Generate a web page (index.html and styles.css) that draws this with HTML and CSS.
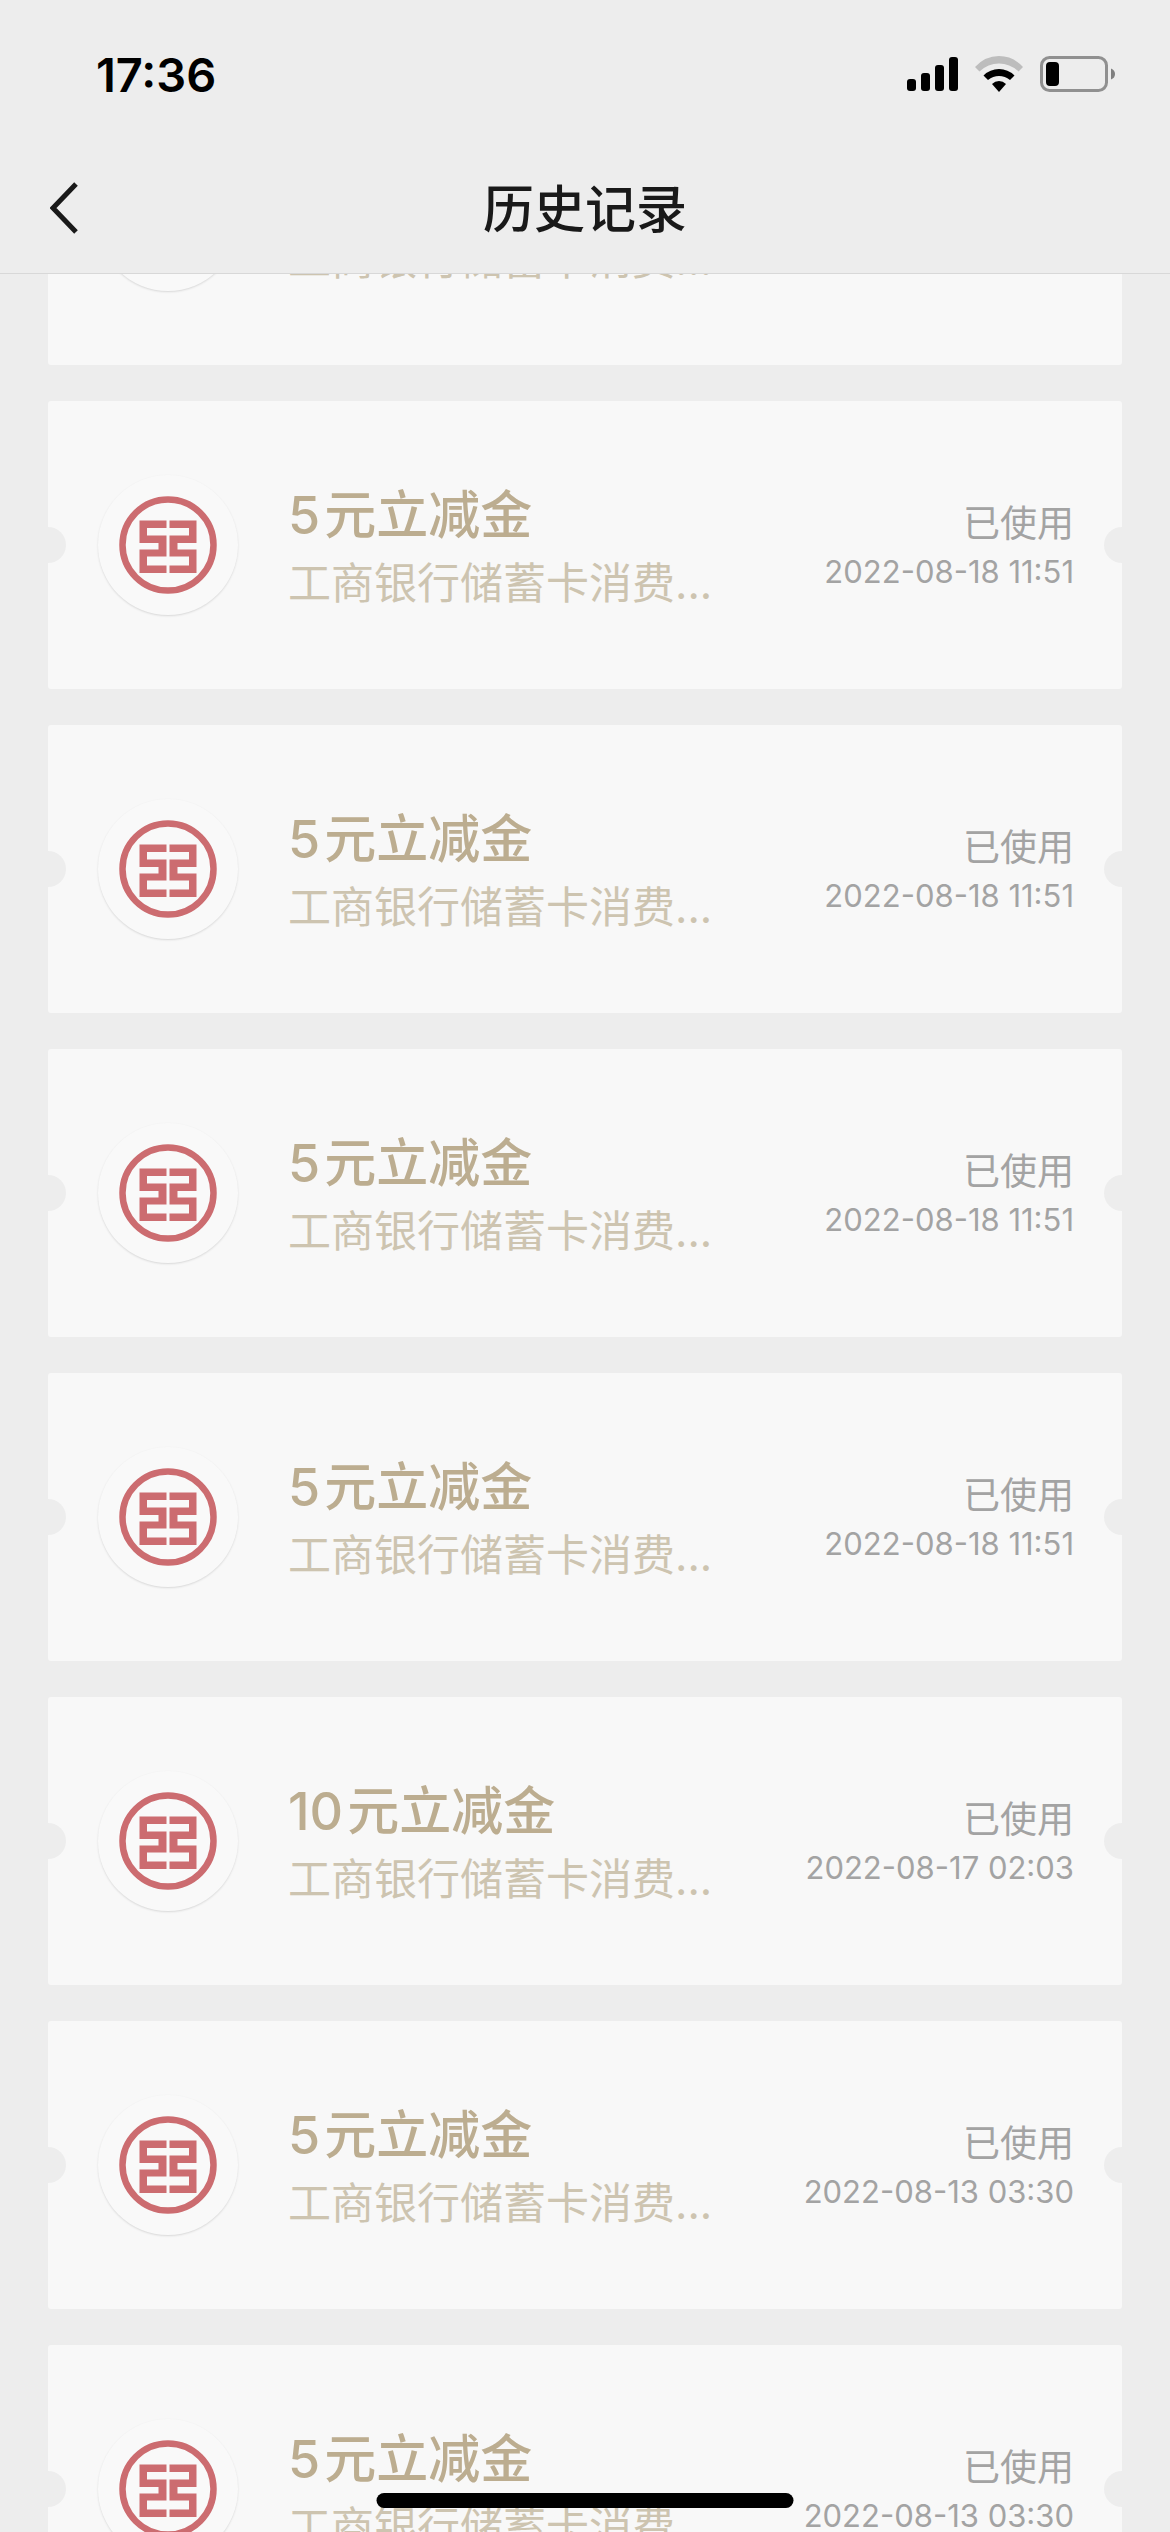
FILE: index.html
```html
<!DOCTYPE html>
<html lang="zh-CN">
<head>
    <meta charset="UTF-8">
    <meta name="viewport" content="width=device-width, initial-scale=1.0">
    <title>历史记录</title>
    <link rel="stylesheet" href="styles.css">
</head>
<body>
    <svg class="defs" aria-hidden="true">
        <symbol id="icbc" viewBox="0 0 98 98">
            <circle cx="49" cy="49" r="45.5" fill="none" stroke="currentColor" stroke-width="6.5"/>
            <path fill="currentColor" d="M20.5 24.5H47.5V32H28V39.5H47.5V60.5H28V69.5H47.5V77H20.5V53.5H39.5V47H20.5Z"/>
            <path fill="currentColor" d="M77.5 24.5H50.5V32H70V39.5H50.5V60.5H70V69.5H50.5V77H77.5V53.5H58.5V47H77.5Z"/>
        </symbol>
    </svg>

    <header class="header">
        <div class="status-bar">
            <span class="time">17:36</span>
            <div class="status-icons">
                <svg width="51" height="36" viewBox="0 0 51 36">
                    <rect x="0" y="23" width="9" height="12" rx="3"/>
                    <rect x="14" y="17" width="9" height="18" rx="3"/>
                    <rect x="28" y="9" width="9" height="26" rx="3"/>
                    <rect x="42" y="1" width="9" height="34" rx="3"/>
                </svg>
                <svg width="48" height="36" viewBox="0 0 48 36">
                    <path fill="#bdbdbd" d="M0 11Q10 0 24 0T48 11L43.500 15.500Q35 7.500 24 7.500T4.500 15.500Z"/>
                    <path d="M8.500 19.500Q15 13 24 13T39.500 19.500L35 24Q30 20 24 20T13 24Z"/>
                    <path d="M17 28Q20 25 24 25T31 28L24 36Z"/>
                </svg>
                <svg width="75" height="36" viewBox="0 0 75 36">
                    <rect x="1.500" y="1.500" width="65" height="33" rx="8" fill="none" stroke="#909090" stroke-width="3"/>
                    <rect x="6" y="6" width="13" height="24" rx="4"/>
                    <path fill="#808080" d="M71 12.500Q75 14 75 18T71 23.500Z"/>
                </svg>
            </div>
        </div>
        <nav class="nav">
            <button class="back" type="button" aria-label="返回">
                <svg width="28" height="52" viewBox="0 0 28 52">
                    <path d="M26 2L3 26L26 50" fill="none" stroke="#191919" stroke-width="5"/>
                </svg>
            </button>
            <h1 class="title">历史记录</h1>
        </nav>
    </header>

    <main class="content">
        <ul class="list">
            <li class="card">
                <div class="logo"><svg><use href="#icbc"/></svg></div>
                <div class="info">
                    <h2 class="name"><span class="amount">5</span>元立减金</h2>
                    <p class="desc">工商银行储蓄卡消费...</p>
                </div>
                <div class="state">
                    <p class="used">已使用</p>
                    <time class="date">2022-08-18 11:51</time>
                </div>
            </li>
            <li class="card">
                <div class="logo"><svg><use href="#icbc"/></svg></div>
                <div class="info">
                    <h2 class="name"><span class="amount">5</span>元立减金</h2>
                    <p class="desc">工商银行储蓄卡消费...</p>
                </div>
                <div class="state">
                    <p class="used">已使用</p>
                    <time class="date">2022-08-18 11:51</time>
                </div>
            </li>
            <li class="card">
                <div class="logo"><svg><use href="#icbc"/></svg></div>
                <div class="info">
                    <h2 class="name"><span class="amount">5</span>元立减金</h2>
                    <p class="desc">工商银行储蓄卡消费...</p>
                </div>
                <div class="state">
                    <p class="used">已使用</p>
                    <time class="date">2022-08-18 11:51</time>
                </div>
            </li>
            <li class="card">
                <div class="logo"><svg><use href="#icbc"/></svg></div>
                <div class="info">
                    <h2 class="name"><span class="amount">5</span>元立减金</h2>
                    <p class="desc">工商银行储蓄卡消费...</p>
                </div>
                <div class="state">
                    <p class="used">已使用</p>
                    <time class="date">2022-08-18 11:51</time>
                </div>
            </li>
            <li class="card">
                <div class="logo"><svg><use href="#icbc"/></svg></div>
                <div class="info">
                    <h2 class="name"><span class="amount">5</span>元立减金</h2>
                    <p class="desc">工商银行储蓄卡消费...</p>
                </div>
                <div class="state">
                    <p class="used">已使用</p>
                    <time class="date">2022-08-18 11:51</time>
                </div>
            </li>
            <li class="card">
                <div class="logo"><svg><use href="#icbc"/></svg></div>
                <div class="info">
                    <h2 class="name"><span class="amount">10</span>元立减金</h2>
                    <p class="desc">工商银行储蓄卡消费...</p>
                </div>
                <div class="state">
                    <p class="used">已使用</p>
                    <time class="date">2022-08-17 02:03</time>
                </div>
            </li>
            <li class="card">
                <div class="logo"><svg><use href="#icbc"/></svg></div>
                <div class="info">
                    <h2 class="name"><span class="amount">5</span>元立减金</h2>
                    <p class="desc">工商银行储蓄卡消费...</p>
                </div>
                <div class="state">
                    <p class="used">已使用</p>
                    <time class="date">2022-08-13 03:30</time>
                </div>
            </li>
            <li class="card">
                <div class="logo"><svg><use href="#icbc"/></svg></div>
                <div class="info">
                    <h2 class="name"><span class="amount">5</span>元立减金</h2>
                    <p class="desc">工商银行储蓄卡消费...</p>
                </div>
                <div class="state">
                    <p class="used">已使用</p>
                    <time class="date">2022-08-13 03:30</time>
                </div>
            </li>
        </ul>
    </main>

    <div class="home-indicator"></div>
</body>
</html>
```
FILE: styles.css
```css
* {
    box-sizing: border-box;
    margin: 0;
    padding: 0;
}
body {
    display: flex;
    flex-direction: column;
    height: 100vh;
    overflow: hidden;
    background-color: #ededed;
    font-family: Inter, "Noto Sans CJK SC", sans-serif;
}
.defs {
    position: absolute;
    width: 0;
    height: 0;
}

/* header */
.header {
    flex: none;
    padding-bottom: 5px;
    border-bottom: 1px solid #d8d8d8;
}
.status-bar {
    display: flex;
    align-items: center;
    justify-content: space-between;
    height: 148px;
    padding: 0 55px 0 96px;
}
.time {
    font-size: 47px;
    font-weight: 600;
    color: #000;
}
.status-icons {
    display: flex;
    gap: 17px;
}
.nav {
    display: grid;
    grid-template-columns: 1fr auto 1fr;
    align-items: center;
    height: 120px;
    padding: 0 50px;
}
.back {
    display: flex;
    justify-self: start;
    border: none;
    background: none;
    cursor: pointer;
}
.title {
    padding-top: 4px;
    font-size: 51px;
    font-weight: 500;
    line-height: 72px;
    color: #191919;
}

/* coupon list, scrolled part of the way into the first card */
.content {
    flex: 1;
    min-height: 0;
    overflow: hidden;
}
.list {
    display: flex;
    flex-direction: column;
    gap: 36px;
    margin-top: -197px;
    padding: 0 48px;
    list-style: none;
}
.card {
    position: relative;
    display: flex;
    align-items: center;
    gap: 50px;
    height: 288px;
    padding: 0 48px 0 50px;
    border-radius: 3px;
    background-color: #f8f8f8;
    overflow: hidden;
}
.card::before,
.card::after {
    content: "";
    position: absolute;
    top: 126px;
    width: 36px;
    height: 36px;
    border-radius: 50%;
    background-color: #ededed;
}
.card::before {
    left: -18px;
}
.card::after {
    right: -18px;
}
.logo {
    display: flex;
    flex: none;
    align-items: center;
    justify-content: center;
    width: 140px;
    height: 140px;
    border-radius: 50%;
    background-color: #f9f9f9;
    box-shadow: 0 1px 2px #d8d8d8;
    color: #cc6c70;
}
.logo svg {
    width: 98px;
    height: 98px;
}
.info {
    flex: 1;
    padding-top: 4px;
    white-space: nowrap;
}
.name {
    font-size: 52px;
    font-weight: 500;
    line-height: 72px;
    color: #bcad90;
}
.amount {
    margin-right: 4px;
}
.desc {
    font-size: 43px;
    font-weight: 400;
    line-height: 62px;
    color: #cdc4b0;
}
.state {
    padding-top: 6px;
    text-align: right;
    line-height: 48px;
    color: #a3a3a3;
}
.used {
    font-size: 37px;
}
.date {
    display: block;
    font-size: 31px;
}

.home-indicator {
    position: fixed;
    bottom: 24px;
    left: 50%;
    width: 417px;
    height: 15px;
    border-radius: 8px;
    background-color: #000;
    transform: translateX(-50%);
}
```
